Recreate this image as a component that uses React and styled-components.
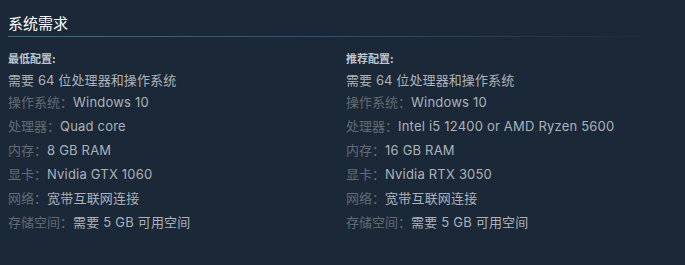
import React from 'react';
import styled, { createGlobalStyle } from 'styled-components';

const GlobalStyle = createGlobalStyle`
  html, body {
    margin: 0;
    padding: 0;
    background: #1b2838;
  }
  body {
    font-family: Inter, "Noto Sans CJK SC", sans-serif;
  }
`;

const Page = styled.div`
  padding: 13px 8px 0 8px;
  height: 265px;
  box-sizing: border-box;
`;

const Title = styled.h2`
  margin: 0;
  font-size: 15px;
  font-weight: 400;
  line-height: 20px;
  color: #ffffff;
  padding-bottom: 3px;
  font-family: "Noto Sans CJK SC", sans-serif;
`;

const Rule = styled.div`
  height: 1px;
  background: linear-gradient(to right, #3f6f8e 0%, rgba(63, 111, 142, 0.45) 60%, rgba(63, 111, 142, 0) 98%);
`;

const Columns = styled.div`
  display: grid;
  grid-template-columns: 338px 1fr;
  padding-top: 14px;
`;

const Column = styled.div`
  display: flex;
  flex-direction: column;
`;

const Heading = styled.div`
  font-size: 11px;
  font-weight: 700;
  line-height: 14px;
  color: #bcc6cf;
  font-family: "Noto Sans CJK SC", sans-serif;
  margin-bottom: 6px;
`;

const Note = styled.div`
  font-size: 13px;
  line-height: 18px;
  color: #acb2b8;
  letter-spacing: 0.1px;
  margin-bottom: 4px;
`;

const List = styled.ul`
  list-style: none;
  margin: 0;
  padding: 0;
  display: flex;
  flex-direction: column;
  gap: 6px;
`;

const Item = styled.li`
  font-size: 13px;
  line-height: 18px;
  color: #acb2b8;
  white-space: nowrap;
`;

const Label = styled.span`
  color: #626b73;
  font-family: "Noto Sans CJK SC", sans-serif;
`;

const Value = styled.span`
  letter-spacing: 0.2px;
`;

const specs = {
  min: {
    heading: '最低配置:',
    rows: [
      ['操作系统', 'Windows 10'],
      ['处理器', 'Quad core'],
      ['内存', '8 GB RAM'],
      ['显卡', 'Nvidia GTX 1060'],
      ['网络', '宽带互联网连接'],
      ['存储空间', '需要 5 GB 可用空间'],
    ],
  },
  rec: {
    heading: '推荐配置:',
    rows: [
      ['操作系统', 'Windows 10'],
      ['处理器', 'Intel i5 12400 or AMD Ryzen 5600'],
      ['内存', '16 GB RAM'],
      ['显卡', 'Nvidia RTX 3050'],
      ['网络', '宽带互联网连接'],
      ['存储空间', '需要 5 GB 可用空间'],
    ],
  },
};

const SpecColumn = ({ data }) => (
  <Column>
    <Heading>{data.heading}</Heading>
    <Note>需要 64 位处理器和操作系统</Note>
    <List>
      {data.rows.map(([label, value]) => (
        <Item key={label}>
          <Label>{label}：</Label>
          <Value>{value}</Value>
        </Item>
      ))}
    </List>
  </Column>
);

const App = () => (
  <>
    <GlobalStyle />
    <Page>
      <Title>系统需求</Title>
      <Rule />
      <Columns>
        <SpecColumn data={specs.min} />
        <SpecColumn data={specs.rec} />
      </Columns>
    </Page>
  </>
);

export default App;
